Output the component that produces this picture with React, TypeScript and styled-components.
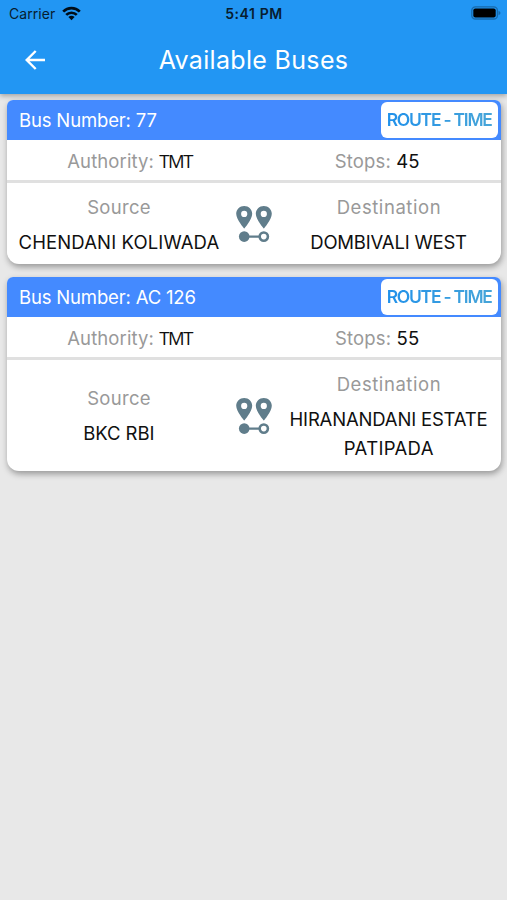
import React from 'react';
import styled, { createGlobalStyle } from 'styled-components';

const GlobalStyle = createGlobalStyle`
  * { box-sizing: border-box; }
  body { margin: 0; background: #e8e8e8; font-family: Inter, 'Liberation Sans', sans-serif; }
`;

const Screen = styled.div`
  min-height: 900px;
  background: #e8e8e8;
`;

const TopArea = styled.header`
  height: 94px;
  background: #2296f3;
  box-shadow: 0 2px 5px rgba(0, 0, 0, 0.3);
`;

const StatusBar = styled.div`
  display: grid;
  grid-template-columns: 1fr auto 1fr;
  align-items: center;
  height: 28px;
  padding: 0 6px 0 9px;
  font-size: 14px;
  line-height: 28px;
  color: #071d30;
`;

const Carrier = styled.div`
  display: flex;
  align-items: center;
  gap: 6.5px;
  letter-spacing: 0.06px;
`;

const WifiSlot = styled.span`
  display: flex;
  padding-bottom: 2px;
`;

const Clock = styled.div`
  margin-right: 2px;
  font-weight: 600;
  letter-spacing: 0.6px;
`;

const BatterySlot = styled.div`
  display: flex;
  justify-content: flex-end;
  padding-bottom: 2px;
`;

const NavBar = styled.nav`
  display: grid;
  grid-template-columns: 72px 1fr 72px;
  align-items: center;
  height: 64px;
`;

const BackButton = styled.button`
  display: flex;
  align-items: center;
  justify-content: center;
  height: 48px;
  padding: 0 2px 1px 0;
  border: 0;
  background: none;
  color: #fff;
`;

const Title = styled.h1`
  margin: 0;
  font-size: 25px;
  font-weight: 400;
  line-height: 36px;
  letter-spacing: 0.33px;
  text-align: center;
  color: #fff;
`;

const BusList = styled.main`
  display: flex;
  flex-direction: column;
  gap: 12.9px;
  padding: 6px 6.5px 0 7px;
`;

const Card = styled.article`
  overflow: hidden;
  border-radius: 6px 6px 12px 12px;
  background: #fff;
  box-shadow: 1px 3px 6px rgba(0, 0, 0, 0.35);
`;

const CardHeader = styled.div`
  display: flex;
  align-items: center;
  justify-content: space-between;
  height: 40px;
  padding: 0 3px 0 12px;
  background: #448aff;
`;

const Text = styled.span<{ $spacing?: number }>`
  letter-spacing: ${(p) => p.$spacing ?? 0}px;
  margin-right: ${(p) => -(p.$spacing ?? 0)}px;
  white-space: nowrap;
`;

const BusNumber = styled(Text)`
  font-size: 18.5px;
  color: #fff;
`;

const RouteButton = styled.button`
  display: flex;
  align-items: center;
  justify-content: center;
  width: 116.5px;
  height: 36px;
  padding: 0 0 2px 1px;
  border: 0;
  border-radius: 6px;
  background: #fff;
  font-family: inherit;
  font-size: 17.5px;
  font-weight: 600;
  letter-spacing: -1.25px;
`;

const RouteLabel = styled.span`
  padding-right: 1.25px;
  background: linear-gradient(90deg, #2191ea, #47a5d8);
  background-clip: text;
  color: transparent;
  white-space: nowrap;
`;

const Facts = styled.div`
  display: grid;
  grid-template-columns: 1fr 1fr;
  height: 43px;
  border-bottom: 3px solid #e0e0e0;
`;

const Fact = styled.div`
  display: flex;
  align-items: center;
  justify-content: center;
  gap: 5.5px;
  padding-top: 1px;
  font-size: 18.5px;
`;

const Label = styled(Text)`
  font-size: 18.5px;
  color: #999;
`;

const Value = styled(Text)`
  color: #101010;
`;

const Authority = styled(Value)`
  font-family: 'Open Sans', sans-serif;
  line-height: 23px;
  padding-bottom: 1px;
`;

const Journey = styled.div`
  display: grid;
  grid-template-columns: 1fr 46px 1fr;
  align-items: center;
  padding: 9.5px 0 7.2px;
`;

const Stop = styled.div`
  display: flex;
  flex-direction: column;
  align-items: center;
  gap: 5.5px;
  line-height: 29.5px;
`;

const Place = styled.div`
  display: flex;
  flex-direction: column;
  align-items: center;
  font-size: 18.5px;
  color: #101010;
`;

const RouteMark = styled.div`
  display: flex;
  justify-content: center;
  padding-bottom: 1px;
`;

const WifiIcon = () => (
  <svg width="19" height="15" viewBox="0 0 19 15">
    <g fill="none" stroke="#000d18" strokeWidth="2.7">
      <path d="M1.2 5.6C5.8 .9 13.2 .9 17.8 5.6" />
      <path d="M4.2 8.9C7.1 6 11.9 6 14.8 8.9" />
    </g>
    <path d="M6.4 10.9Q9.5 8.5 12.6 10.9L9.5 14.3Z" fill="#000d18" />
  </svg>
);

const BatteryIcon = () => (
  <svg width="30" height="14" viewBox="0 0 30 14">
    <rect x="0.8" y="0.8" width="25.6" height="12.2" rx="3.6" fill="none" stroke="#176aac" strokeWidth="1.3" />
    <rect x="2.3" y="2.4" width="22.4" height="9" rx="2" fill="#000" />
    <path d="M27.5 4.8Q29.5 5.7 29.5 7T27.5 9.2Z" fill="#176aac" />
  </svg>
);

const BackIcon = () => (
  <svg width="22" height="22" viewBox="0 0 22 22" fill="none" stroke="#fff" strokeWidth="2.4">
    <path d="M21 11H3M11.7 2L2.7 11L11.7 20" />
  </svg>
);

const RouteIcon = () => (
  <svg width="38" height="38" viewBox="0 0 38 38" fill="#607d8b">
    <path
      fillRule="evenodd"
      d="M9.2 1C4.7 1 1.2 4.4 1.2 8.8C1.2 14.6 9.2 23.6 9.2 23.6S17.2 14.6 17.2 8.8C17.2 4.4 13.7 1 9.2 1ZM9.2 5.8A3.1 3.1 0 1 1 9.2 12A3.1 3.1 0 0 1 9.2 5.8Z"
    />
    <path
      fillRule="evenodd"
      d="M28.8 1C24.3 1 20.8 4.4 20.8 8.8C20.8 14.6 28.8 23.6 28.8 23.6S36.8 14.6 36.8 8.8C36.8 4.4 33.3 1 28.8 1ZM28.8 5.8A3.1 3.1 0 1 1 28.8 12A3.1 3.1 0 0 1 28.8 5.8Z"
    />
    <circle cx="9.2" cy="31.6" r="5.3" />
    <path d="M9 30.4H25V32.8H9Z" />
    <circle cx="28.8" cy="31.6" r="4.1" fill="#fff" stroke="#607d8b" strokeWidth="2.6" />
  </svg>
);

type Run = { text: string; spacing: number };

type Bus = {
  number: Run;
  authority: string;
  stops: Run;
  source: Run[];
  destination: Run[];
};

const buses: Bus[] = [
  {
    number: { text: 'Bus Number: 77', spacing: -0.16 },
    authority: 'TMT',
    stops: { text: '45', spacing: 0 },
    source: [{ text: 'CHENDANI KOLIWADA', spacing: 0.12 }],
    destination: [{ text: 'DOMBIVALI WEST', spacing: -0.2 }],
  },
  {
    number: { text: 'Bus Number: AC 126', spacing: -0.17 },
    authority: 'TMT',
    stops: { text: '55', spacing: 0.3 },
    source: [{ text: 'BKC RBI', spacing: -0.1 }],
    destination: [
      { text: 'HIRANANDANI ESTATE', spacing: -0.18 },
      { text: 'PATIPADA', spacing: 0.33 },
    ],
  },
];

const PlaceName = ({ lines }: { lines: Run[] }) => (
  <Place>
    {lines.map((line) => (
      <Text key={line.text} $spacing={line.spacing}>{line.text}</Text>
    ))}
  </Place>
);

const BusCard = ({ bus }: { bus: Bus }) => (
  <Card>
    <CardHeader>
      <BusNumber $spacing={bus.number.spacing}>{bus.number.text}</BusNumber>
      <RouteButton>
        <RouteLabel>ROUTE - TIME</RouteLabel>
      </RouteButton>
    </CardHeader>
    <Facts>
      <Fact>
        <Label $spacing={0.1}>Authority:</Label>
        <Authority $spacing={-1.41}>{bus.authority}</Authority>
      </Fact>
      <Fact>
        <Label $spacing={0.15}>Stops:</Label>
        <Value $spacing={bus.stops.spacing}>{bus.stops.text}</Value>
      </Fact>
    </Facts>
    <Journey>
      <Stop>
        <Label $spacing={0.3}>Source</Label>
        <PlaceName lines={bus.source} />
      </Stop>
      <RouteMark>
        <RouteIcon />
      </RouteMark>
      <Stop>
        <Label $spacing={0.56}>Destination</Label>
        <PlaceName lines={bus.destination} />
      </Stop>
    </Journey>
  </Card>
);

export default function App() {
  return (
    <Screen>
      <GlobalStyle />
      <TopArea>
        <StatusBar>
          <Carrier>
            Carrier
            <WifiSlot>
              <WifiIcon />
            </WifiSlot>
          </Carrier>
          <Clock>5:41 PM</Clock>
          <BatterySlot>
            <BatteryIcon />
          </BatterySlot>
        </StatusBar>
        <NavBar>
          <BackButton aria-label="Back">
            <BackIcon />
          </BackButton>
          <Title>Available Buses</Title>
        </NavBar>
      </TopArea>
      <BusList>
        {buses.map((bus) => (
          <BusCard key={bus.number.text} bus={bus} />
        ))}
      </BusList>
    </Screen>
  );
}
